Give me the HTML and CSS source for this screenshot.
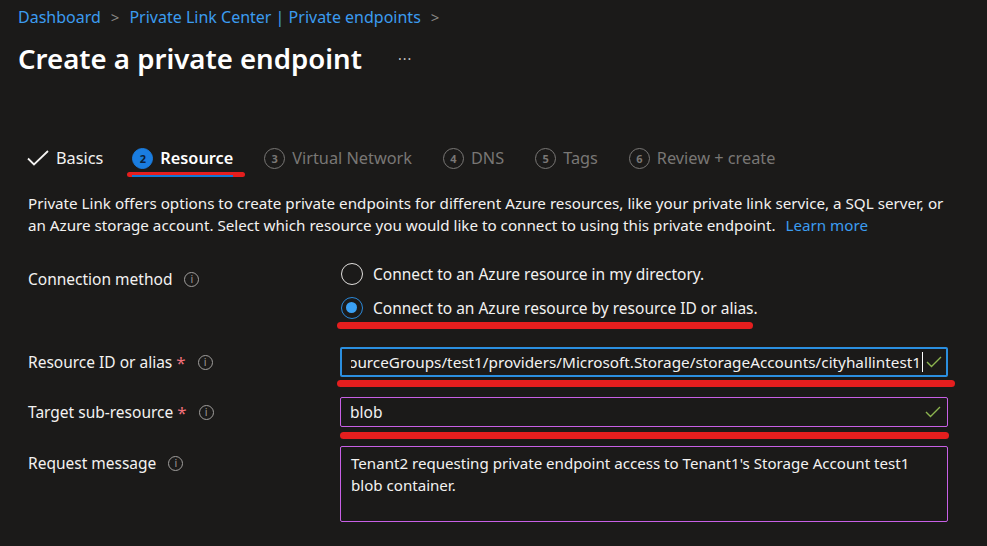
FILE: index.html
```html
<!DOCTYPE html>
<html>
<head>
<meta charset="utf-8">
<link rel="stylesheet" href="styles.css">
</head>
<body>
<div class="page">
  <nav class="breadcrumb">
    <a>Dashboard</a><span class="sep">&gt;</span><a>Private Link Center | Private endpoints</a><span class="sep">&gt;</span>
  </nav>
  <div class="title-row">
    <h1>Create a private endpoint</h1>
    <span class="more">···</span>
  </div>

  <div class="tabs">
    <div class="tab done">
      <svg class="check" width="22" height="16" viewBox="0 0 22 16"><path d="M1 8.5 L7 14.5 L21 1" fill="none" stroke="#f3f2f1" stroke-width="1.8"/></svg>
      <span>Basics</span>
    </div>
    <div class="tab active">
      <span class="num">2</span><span>Resource</span>
      <span class="mark tab-mark"></span>
    </div>
    <div class="tab"><span class="num">3</span><span>Virtual Network</span></div>
    <div class="tab"><span class="num">4</span><span>DNS</span></div>
    <div class="tab"><span class="num">5</span><span>Tags</span></div>
    <div class="tab"><span class="num">6</span><span>Review + create</span></div>
  </div>

  <p class="desc">Private Link offers options to create private endpoints for different Azure resources, like your private link service, a SQL server, or an Azure storage account. Select which resource you would like to connect to using this private endpoint. <a class="link">Learn more</a></p>

  <div class="row row-method">
    <div class="label">Connection method <span class="info">i</span></div>
    <div class="control">
      <div class="radio"><span class="dot"></span><span>Connect to an Azure resource in my directory.</span></div>
      <div class="radio checked"><span class="dot"></span><span>Connect to an Azure resource by resource ID or alias.</span></div>
      <div class="mark mark-radio"></div>
    </div>
  </div>

  <div class="row row-id">
    <div class="label">Resource ID or alias <span class="req">*</span> <span class="info">i</span></div>
    <div class="control">
      <div class="input focus">
        <div class="clip"><span class="val">resourceGroups/test1/providers/Microsoft.Storage/storageAccounts/cityhallintest1</span><span class="caret"></span></div>
        <svg class="ok" width="16" height="12" viewBox="0 0 16 12"><path d="M1 6 L5.5 10.5 L15 1" fill="none" stroke="#8cb44f" stroke-width="1.4"/></svg>
      </div>
      <div class="mark mark-id"></div>
    </div>
  </div>

  <div class="row row-target">
    <div class="label">Target sub-resource <span class="req">*</span> <span class="info">i</span></div>
    <div class="control">
      <div class="input violet">
        <div class="clip start"><span class="val">blob</span></div>
        <svg class="ok" width="16" height="12" viewBox="0 0 16 12"><path d="M1 6 L5.5 10.5 L15 1" fill="none" stroke="#8cb44f" stroke-width="1.4"/></svg>
      </div>
      <div class="mark mark-target"></div>
    </div>
  </div>

  <div class="row row-msg">
    <div class="label">Request message <span class="info">i</span></div>
    <div class="control">
      <div class="textarea">Tenant2 requesting private endpoint access to Tenant1's Storage Account test1 blob container.</div>
    </div>
  </div>
</div>
</body>
</html>
```

FILE: styles.css
```css
* { box-sizing: border-box; }
html, body { margin: 0; padding: 0; }
body {
  background: #1b1a19;
  color: #f3f2f1;
  font-family: "Noto Sans", "Open Sans", sans-serif;
  font-size: 15px;
  width: 987px;
  height: 546px;
  overflow: hidden;
}
.page { padding: 0 0 0 18px; }

.breadcrumb {
  height: 34px;
  display: flex;
  align-items: center;
  font-size: 16px;
  color: #3b9cf0;
}
.breadcrumb .sep { color: #8a8886; margin: 0 10px; font-size: 15px; }

.title-row {
  display: flex;
  align-items: center;
  height: 48px;
}
h1 {
  margin: 0;
  font-size: 27.6px;
  font-weight: 600;
  color: #ffffff;
}
.more { margin-left: 36px; color: #c8c6c4; font-size: 14px; letter-spacing: 1px; }

.tabs {
  margin-top: 62px;
  margin-left: 9px;
  display: flex;
  align-items: center;
  gap: 31px;
  height: 28px;
  font-size: 16.3px;
  color: #797775;
}
.tab { position: relative; display: flex; align-items: center; gap: 7px; height: 28px; }
.tab.done { color: #f3f2f1; margin-right: -2px; }
.tab.active { color: #ffffff; }
.tab.active::after {
  content: "";
  position: absolute;
  left: 0; right: 0; bottom: -5px;
  height: 2px;
  background: #0f78d4;
}
.num {
  width: 21px; height: 21px;
  border: 1.5px solid #797775;
  border-radius: 50%;
  display: inline-flex; align-items: center; justify-content: center;
  font-size: 11px; font-weight: 700;
}
.tab.active .num { background: #1a7de0; border-color: #1a7de0; color: #0b1f3a; }
.tab.active span:nth-child(2) { font-weight: 600; }

.mark { background: #e41e1e; border-radius: 4px; }
.tab-mark {
  position: absolute;
  left: -5px; right: -12px; bottom: -5px;
  height: 5px;
}

.desc {
  margin: 20px 0 0 10px;
  width: 922px;
  font-size: 15.2px;
  line-height: 22px;
}
.link { color: #3b9cf0; margin-left: 6px; }

.row { display: flex; margin-left: 10px; }
.label {
  width: 312px;
  flex: none;
  display: flex;
  align-items: center;
  font-size: 15.5px;
  height: 30px;
}
.req { color: #f1707b; margin-left: 4px; font-size: 17px; }
.info {
  width: 15px; height: 15px;
  border: 1px solid #a19f9d;
  border-radius: 50%;
  display: inline-flex; align-items: center; justify-content: center;
  font-size: 10px; color: #a19f9d;
  margin-left: 12px;
  font-family: "DejaVu Sans", sans-serif;
}
.control { width: 608px; flex: none; }

.row-method { margin-top: 21px; }
.row-method .label { margin-top: 7px; }
.radio { display: flex; align-items: center; gap: 10px; height: 34px; font-size: 15.5px; }
.radio .dot {
  width: 22px; height: 22px; margin-left: 1px;
  border: 1.5px solid #e1dfdd;
  border-radius: 50%;
  flex: none;
  position: relative;
}
.radio.checked .dot { border-color: #2b88d8; }
.radio.checked .dot::after {
  content: "";
  position: absolute;
  left: 4px; top: 4px;
  width: 11px; height: 11px;
  border-radius: 50%;
  background: #3aa0f3;
}
.mark-radio { width: 416px; height: 7px; margin-left: -3px; margin-top: -3px; }

.row-id { margin-top: 18px; }
.row-id .label, .row-target .label { height: 30px; }
.input {
  height: 30px;
  width: 608px;
  border: 2px solid #2b8fe0;
  border-radius: 2px;
  display: flex;
  align-items: center;
  padding: 0 4px 0 9px;
  font-size: 15.3px;
  gap: 3px;
}
.input.violet { border: 1.5px solid #c860e6; padding-right: 6px; font-size: 15.5px; }
.clip {
  flex: 1;
  overflow: hidden;
  white-space: nowrap;
  display: flex;
  justify-content: flex-end;
  align-items: center;
}
.clip.start { justify-content: flex-start; }
.val { flex: none; }
.caret { width: 1px; height: 20px; background: #fff; flex: none; margin-left: 1px; }
.ok { flex: none; }
.mark-id { width: 618px; height: 7px; margin-left: -3px; margin-top: 3px; }
.row-target { margin-top: 10px; }
.mark-target { width: 609px; height: 7px; margin-top: 5px; }
.row-msg { margin-top: 7px; }
.row-msg .label { align-items: center; height: 34px; }
.textarea {
  height: 76px;
  border: 1.5px solid #c860e6;
  border-radius: 2px;
  padding: 5px 10px;
  font-size: 15.1px;
  line-height: 22px;
}
```
